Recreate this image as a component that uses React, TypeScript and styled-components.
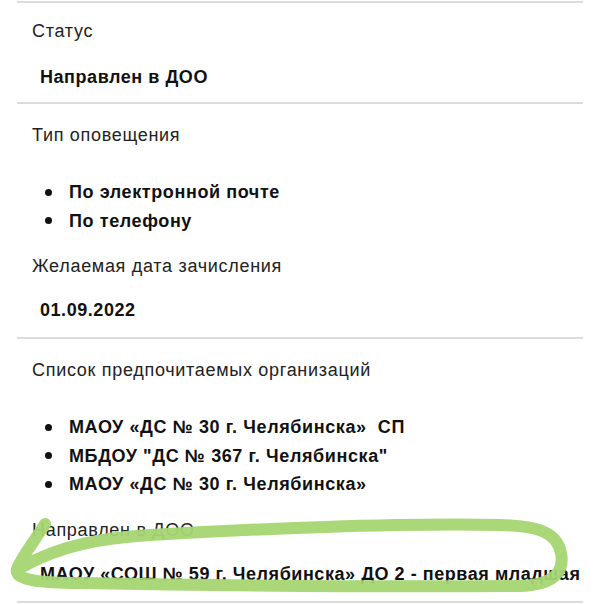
import React from 'react';
import styled, { createGlobalStyle } from 'styled-components';

interface Field {
    label: string;
    value?: string;
    items?: string[];
}

const sections: Field[][] = [
    [{ label: 'Статус', value: 'Направлен в ДОО' }],
    [
        { label: 'Тип оповещения', items: ['По электронной почте', 'По телефону'] },
        { label: 'Желаемая дата зачисления', value: '01.09.2022' },
    ],
    [
        {
            label: 'Список предпочитаемых организаций',
            items: [
                'МАОУ «ДС № 30 г. Челябинска»  СП',
                'МБДОУ "ДС № 367 г. Челябинска"',
                'МАОУ «ДС № 30 г. Челябинска»',
            ],
        },
        { label: 'Направлен в ДОО', value: 'МАОУ «СОШ № 59 г. Челябинска» ДО 2 - первая младшая' },
    ],
];

const GlobalStyle = createGlobalStyle`
    html, body {
        margin: 0;
        padding: 0;
        background: #ffffff;
        overflow: hidden;
    }
    body {
        font-family: "Liberation Sans", Arial, sans-serif;
        color: #1c1c1e;
    }
`;

const Page = styled.div`
    position: relative;
    padding: 0 17px;
`;

const Section = styled.section`
    border-bottom: 2px solid #dcdcdc;
    padding: 20px 0 16px;

    &:first-child {
        border-top: 2px solid #dcdcdc;
        margin-top: 1px;
        padding-top: 17px;
        padding-bottom: 14px;
    }
`;

const FieldBlock = styled.div`
    & + & {
        margin-top: 20px;
    }
`;

const Label = styled.div`
    padding-left: 15px;
    font-size: 18px;
    line-height: 22px;
    letter-spacing: 0.7px;
    color: #222222;
`;

const Value = styled.div<{ $gap?: number }>`
    margin-top: ${p => p.$gap ?? 22}px;
    padding-left: 23px;
    font-size: 18px;
    line-height: 22px;
    letter-spacing: 0.55px;
    font-weight: 700;
    color: #111111;
    white-space: nowrap;
`;

const BulletList = styled.ul`
    list-style: none;
    margin: 32px 0 0;
    padding: 0 0 0 28px;
`;

const BulletItem = styled.li`
    display: flex;
    align-items: center;
    font-size: 18px;
    line-height: 28.5px;
    letter-spacing: 0.6px;
    font-weight: 700;
    color: #111111;
    white-space: pre;

    &::before {
        content: '';
        flex: none;
        width: 7px;
        height: 7px;
        margin-right: 17px;
        border-radius: 50%;
        background: #111111;
    }
`;

const Scribble = styled.svg`
    position: absolute;
    left: 0;
    top: 0;
    width: 600px;
    height: 604px;
    pointer-events: none;
`;

const App = () => {
    return (
        <Page>
            <GlobalStyle />
            {sections.map((fields, i) => (
                <Section key={i}>
                    {fields.map(field => (
                        <FieldBlock key={field.label}>
                            <Label>{field.label}</Label>
                            {field.value && <Value $gap={i === 0 ? 24 : 22}>{field.value}</Value>}
                            {field.items && (
                                <BulletList>
                                    {field.items.map(item => (
                                        <BulletItem key={item}>{item}</BulletItem>
                                    ))}
                                </BulletList>
                            )}
                        </FieldBlock>
                    ))}
                </Section>
            ))}
            {/* hand-drawn marker around the last field */}
            <Scribble viewBox="0 0 600 604">
                <path
                    d="M 45 523 C 36 538, 22 555, 17 568 C 14 579, 40 582, 80 582 C 200 584, 400 586, 520 585 C 552 584, 565 572, 561 552 C 557 532, 540 525, 500 524 C 400 522, 250 528, 150 534 C 100 537, 60 545, 24 565"
                    fill="none"
                    stroke="#a5d672"
                    strokeWidth={12}
                    strokeLinecap="round"
                    strokeLinejoin="round"
                    opacity={0.95}
                />
            </Scribble>
        </Page>
    );
};

export default App;
